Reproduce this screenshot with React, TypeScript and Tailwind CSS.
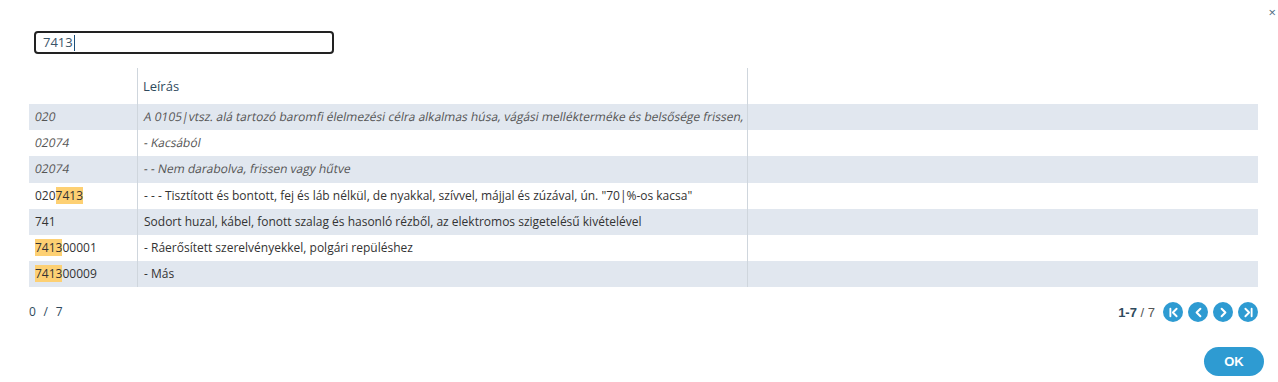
import { ChevronFirst, ChevronLast, ChevronLeft, ChevronRight } from "lucide-react";

type Row = { code: string; hl?: [number, number]; desc: string; italic?: boolean };

const rows: Row[] = [
  { code: "020", desc: "A 0105|vtsz. alá tartozó baromfi élelmezési célra alkalmas húsa, vágási melléktermé\u006Be és belsősége frissen,", italic: true },
  { code: "02074", desc: "- Kacsából", italic: true },
  { code: "02074", desc: "- - Nem darabolva, frissen vagy hűtve", italic: true },
  { code: "0207413", hl: [3, 7], desc: '- - - Tisztított és bontott, fej és láb nélkül, de nyakkal, szívvel, májjal és zúzával, ún. "70|%-os kacsa"' },
  { code: "741", desc: "Sodort huzal, kábel, fonott szalag és hasonló rézből, az elektromos szigetelésű kivételével" },
  { code: "741300001", hl: [0, 4], desc: "- Ráerősített szerelvényekkel, polgári repüléshez" },
  { code: "741300009", hl: [0, 4], desc: "- Más" },
];

function Code({ r }: { r: Row }) {
  if (!r.hl) return <>{r.code}</>;
  const [a, b] = r.hl;
  return (
    <>
      {r.code.slice(0, a)}
      <span className="bg-[#fdd073]">{r.code.slice(a, b)}</span>
      {r.code.slice(b)}
    </>
  );
}

// the original renders a slanted regular face, wider than a true italic
function Text({ italic, children }: { italic?: boolean; children: React.ReactNode }) {
  if (!italic) return <span>{children}</span>;
  return <span className="inline-block -skew-x-[11deg] text-[#555]">{children}</span>;
}

function PageBtn({ children }: { children: React.ReactNode }) {
  return (
    <span className="flex h-[20px] w-[20px] items-center justify-center rounded-full bg-[#2e9bd2] text-white">
      {children}
    </span>
  );
}

export default function App() {
  return (
    <div
      className="relative h-[382px] w-[1278px] bg-white text-[12px] text-[#333]"
      style={{ fontFamily: '"Open Sans", "Liberation Sans", sans-serif' }}
    >
      {/* close */}
      <span className="absolute right-[2px] top-[6px] text-[13px] leading-none text-[#4b6a80]">×</span>

      <div className="flex flex-col px-[29px] pt-[31px]">
        {/* search */}
        <div className="ml-[5px] flex h-[23px] w-[300px] items-center rounded-[4px] border-2 border-[#222] px-[7px] text-[13px] text-[#3a5468]">
          7413<span className="ml-[1px] h-[16px] w-[1px] bg-[#1d4f7a]" />
        </div>

        {/* table */}
        <div className="mt-[14px] mr-[-9px]">
          <div className="flex h-[36px]">
            <div className="w-[109px] border-r border-[#cfd6dd]" />
            <div className="flex w-[610px] items-end border-r border-[#cfd6dd] pb-[8px] pl-[5px] text-[13px] text-[#2f4a5d]">
              Leírás
            </div>
            <div className="flex-1" />
          </div>
          {rows.map((r, i) => (
            <div key={i} className={`flex h-[26.2px] ${i % 2 === 0 ? "bg-[#e1e7ef]" : "bg-white"}`}>
              <div className="flex w-[109px] items-center border-r border-[#cfd6dd] pl-[6px] leading-[20px]">
                <Text italic={r.italic}>
                  <Code r={r} />
                </Text>
              </div>
              <div className="flex w-[610px] items-center overflow-hidden whitespace-nowrap border-r border-[#cfd6dd] pl-[6px]">
                <Text italic={r.italic}>{r.desc}</Text>
              </div>
              <div className="flex-1" />
            </div>
          ))}
        </div>

        {/* footer */}
        <div className="mt-[15px] flex items-center justify-between">
          <span className="text-[12px] tracking-[0.5px] text-[#2f4a5d]">0&nbsp;&nbsp;/&nbsp;&nbsp;7</span>
          <div className="mr-[-9px] flex items-center gap-[5px]">
            <span className="mr-[3px] text-[13px] text-[#555]" style={{ fontFamily: '"Liberation Sans", sans-serif' }}>
              <b className="text-[#2f4a5d]">1-7</b> / 7
            </span>
            <PageBtn>
              <ChevronFirst size={15} strokeWidth={3} />
            </PageBtn>
            <PageBtn>
              <ChevronLeft size={15} strokeWidth={3.25} />
            </PageBtn>
            <PageBtn>
              <ChevronRight size={15} strokeWidth={3.25} />
            </PageBtn>
            <PageBtn>
              <ChevronLast size={15} strokeWidth={3} />
            </PageBtn>
          </div>
        </div>

        <div className="mt-[25px] flex justify-end">
          <button
            className="mr-[-15px] h-[29px] w-[60px] rounded-full bg-[#2e9bd2] text-[13px] font-bold text-white"
            style={{ fontFamily: '"Liberation Sans", sans-serif' }}
          >
            OK
          </button>
        </div>
      </div>
    </div>
  );
}
